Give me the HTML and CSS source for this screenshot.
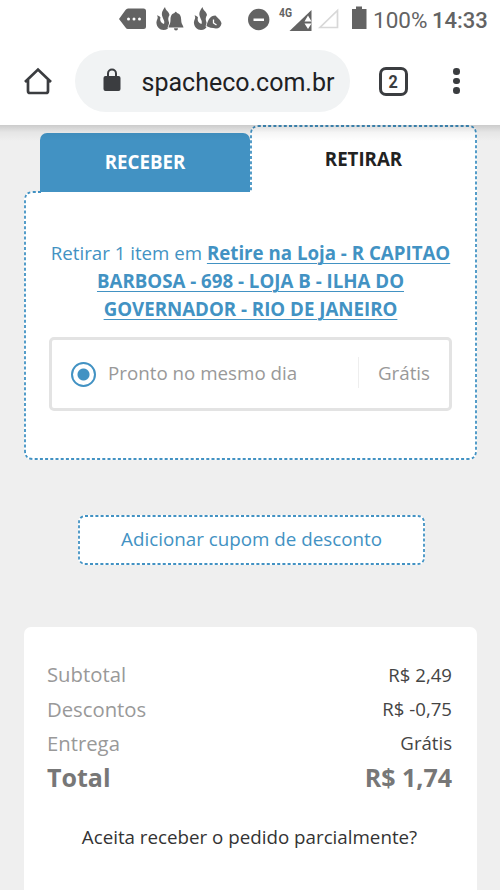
FILE: index.html
```html
<!DOCTYPE html>
<html lang="pt-BR">
<head>
<meta charset="utf-8">
<title>Carrinho</title>
<link rel="stylesheet" href="styles.css">
</head>
<body>
<header class="chrome">
  <div class="status">
    <svg class="status-icons" viewBox="0 0 260 40" aria-hidden="true">
      <g fill="#636363">
        <path d="M9 19 15.500 10Q16.500 8.500 18 8.500H33.500Q36 8.500 36 11V26.500Q36 29 33.500 29H18Q16.500 29 15.500 27.500Z"/>
        <path id="flame" d="M55 7C52.500 10.500 51 13 52.500 17C53.500 20 55 21 54 24C51 23 49.500 20.500 50.500 17.500C49.500 16 48 15.500 47 15.500C49 18 46 20 46.500 23.500C47 27 49.500 30 53.500 30C56.500 30 58.500 28.500 59.500 26C60 22 56.500 20 59.500 15C59 11.500 55.500 10.500 55 7Z"/>
        <path class="cutout" d="M64.500 13Q65.700 10.500 67 13C70.500 14 71.200 17 71.200 20C71.200 24 73 25 73.500 27.500H58.500C59 25 60.500 24 60.500 20C60.500 17 61 14 64.500 13Z"/>
        <path d="M64 28.300H68Q68 30.500 66 30.500Q64 30.500 64 28.300Z"/>
        <use href="#flame" x="37.500"/>
        <path class="cutout" d="M96.500 26C98 20 100 15.500 105.500 15.500C108 18.500 111 20 111.500 23.500C111 26.500 109 28.500 106 28.500C102 28 99 27.500 96.500 26Z"/>
        <circle cx="148.700" cy="19.500" r="10.700"/>
        <path d="M201.500 10V31H179.500Z"/>
        <path d="M242 9H246V6.500H252V9H256.500V29H242Z"/>
      </g>
      <g fill="#fff"><circle cx="18.500" cy="19" r="1.500"/><circle cx="24" cy="19" r="1.500"/><circle cx="29.500" cy="19" r="1.500"/><path d="M143.500 18.500H154V21H143.500Z"/><path d="M198 15.500 201.500 21.500H194.500ZM194.500 23.500H201.500L198 29Z"/></g>
      <path d="M103.500 19.500V23L106.500 25" fill="none" stroke="#fff" stroke-width="1.300"/>
      <path d="M227.500 10.500V27.500H210Z" fill="none" stroke="#d8d8d8" stroke-width="1.700"/>
      <text x="169" y="17" class="network" textLength="13" lengthAdjust="spacingAndGlyphs">4G</text>
    </svg>
    <span class="battery">100%</span><span class="clock">14:33</span>
  </div>
  <div class="toolbar">
    <svg class="home" viewBox="0 0 30 30" fill="none" stroke="#3b3d40" stroke-width="2.700" aria-hidden="true"><path d="M2 16 15 3.500 28 16M5 14V25Q5 27 7 27H23Q25 27 25 25V14"/></svg>
    <div class="address">
      <svg class="lock" viewBox="0 0 18 24" aria-hidden="true"><rect x=".5" y="8" width="17" height="15" rx="2" fill="#3b3d40"/><path d="M5 9V5.500A4 4 0 0 1 13 5.500V9" fill="none" stroke="#3b3d40" stroke-width="2"/></svg>
      <span class="url">spacheco.com.br</span>
    </div>
    <span class="tab-count"><span>2</span></span>
    <span class="more"><i></i><i></i><i></i></span>
  </div>
</header>
<main class="page">
  <section class="delivery">
    <svg class="outline" viewBox="0 0 453 335" aria-hidden="true"><path d="M17 67H9Q1 67 1 75V326Q1 334 9 334H444Q452 334 452 326V9Q452 1 444 1H235Q227 1 227 9V67"/></svg>
    <nav class="tabs"><a class="tab receive">RECEBER</a><a class="tab pickup">RETIRAR</a></nav>
    <div class="panel">
      <p class="store">Retirar 1 item em <b>Retire na Loja - R CAPITAO</b><br><b>BARBOSA - 698 - LOJA B - ILHA DO</b><br><b>GOVERNADOR - RIO DE JANEIRO</b></p>
      <label class="option"><span class="radio"></span><span class="option-name">Pronto no mesmo dia</span><span class="option-price">Grátis</span></label>
    </div>
  </section>
  <button class="coupon"><svg class="coupon-outline" viewBox="0 0 347 50" aria-hidden="true"><rect x="1" y="1" width="345" height="48" rx="6"/></svg><span>Adicionar cupom de desconto</span></button>
  <section class="summary">
    <div class="row"><span>Subtotal</span><span class="value">R$ 2,49</span></div>
    <div class="row"><span>Descontos</span><span class="value">R$ -0,75</span></div>
    <div class="row"><span>Entrega</span><span class="value">Grátis</span></div>
    <div class="row total"><span>Total</span><span>R$ 1,74</span></div>
    <p class="question">Aceita receber o pedido parcialmente?</p>
  </section>
</main>
</body>
</html>
```
FILE: styles.css
```css
* { box-sizing: border-box; }
body { margin: 0; height: 890px; overflow: hidden; background: #efefef; font-family: "Open Sans", sans-serif; }
svg { display: block; flex: none; }
.chrome { height: 125px; background: #fff; font-family: Roboto, sans-serif; }
.status { display: flex; align-items: center; height: 40px; padding-left: 110px; color: #636363; font-size: 23px; white-space: nowrap; }
.status-icons { width: 260px; height: 40px; }
.network { font: 700 12px Roboto, sans-serif; fill: #636363; }
.cutout { stroke: #fff; stroke-width: 1.600; paint-order: stroke; }
.battery { width: 54px; margin-left: 3px; font-size: 22.500px; }
.clock { margin-left: 5px; font-size: 22px; font-weight: 500; }
.toolbar { display: flex; align-items: center; height: 82px; padding-left: 23px; }
.home { width: 30px; height: 30px; }
.address { display: flex; align-items: center; width: 275px; height: 62px; margin-left: 22px; padding-left: 28px; border-radius: 31px; background: #f1f3f4; }
.lock { width: 18px; height: 24px; margin-bottom: 2px; }
.url { margin: 2px 0 0 20.500px; color: #202124; font-size: 25px; }
.tab-count { display: flex; align-items: center; justify-content: center; width: 29px; height: 29px; margin-left: 29px; border: 3px solid #3b3d40; border-radius: 7px; color: #3b3d40; font: 700 18px Roboto, sans-serif; }
.tab-count span { transform: scaleX(.9); }
.more { display: grid; gap: 3px; margin-left: 45px; }
.more i { width: 6.500px; height: 6.500px; border-radius: 50%; background: #3b3d40; }
.page { position: relative; display: flex; flex-direction: column; height: 765px; padding: 0 23px 0 24px; }
.page::before { content: ""; position: absolute; z-index: 2; inset: 0 0 auto; height: 16px; background: linear-gradient(rgba(0,0,0,.15), rgba(0,0,0,.04) 45%, transparent); pointer-events: none; }
.delivery { position: relative; height: 335px; }
.outline, .coupon-outline { position: absolute; inset: 0; width: 100%; height: 100%; fill: none; stroke: #4292c3; stroke-width: 1.800; stroke-dasharray: 3 2.200; }
.tabs { display: flex; align-items: flex-end; height: 67px; padding-left: 16px; }
.tab { display: flex; justify-content: center; font-size: 18.700px; font-weight: 700; line-height: 24px; }
.receive { width: 210px; height: 59px; padding-top: 17px; border-radius: 7px 7px 0 0; background: #4292c3; color: #fff; }
.pickup { width: 227px; height: 67px; padding-top: 22px; border-radius: 8px 8px 0 0; background: #fff; color: #222; }
.panel { height: 268px; padding: 47px 25px 0; border-radius: 8px 0 8px 8px; background: #fff; }
.store { margin: 0 -10px; color: #4292c3; font-size: 18.700px; line-height: 28px; text-align: center; white-space: nowrap; }
.store b { text-decoration: underline; text-decoration-thickness: 1px; text-underline-offset: 3px; }
.option { display: flex; align-items: center; height: 74px; margin-top: 14px; border: 3px solid #e3e3e3; border-radius: 5px; color: #999; font-size: 18.750px; }
.radio { width: 25px; height: 25px; margin-left: 19px; border: 2.500px solid #4292c3; border-radius: 50%; background: radial-gradient(circle, #4292c3 5.500px, transparent 6.500px); }
.option-name { margin: -3px 0 0 12px; }
.option-price { margin: -3px 0 0 auto; padding: 3px 19px; border-left: 1px solid #eee; }
.coupon { position: relative; align-self: center; width: 347px; height: 50px; margin: 55px 0 0 2px; padding: 0 0 3px; border: 0; border-radius: 7px; background: #fff; color: #4292c3; font: 18.800px "Open Sans", sans-serif; }
.summary { flex: 1; margin-top: 62px; padding: 30px 25px 0 23px; border-radius: 7px 7px 0 0; background: #fff; }
.row { display: flex; align-items: center; justify-content: space-between; height: 34.400px; color: #999; font-size: 20.300px; }
.value { color: #444; font-size: 18.600px; }
.total { color: #777; font-size: 25px; font-weight: 700; }
.question { margin: 17px 0 0; color: #333; font-size: 18.750px; line-height: 50px; text-align: center; }
```
